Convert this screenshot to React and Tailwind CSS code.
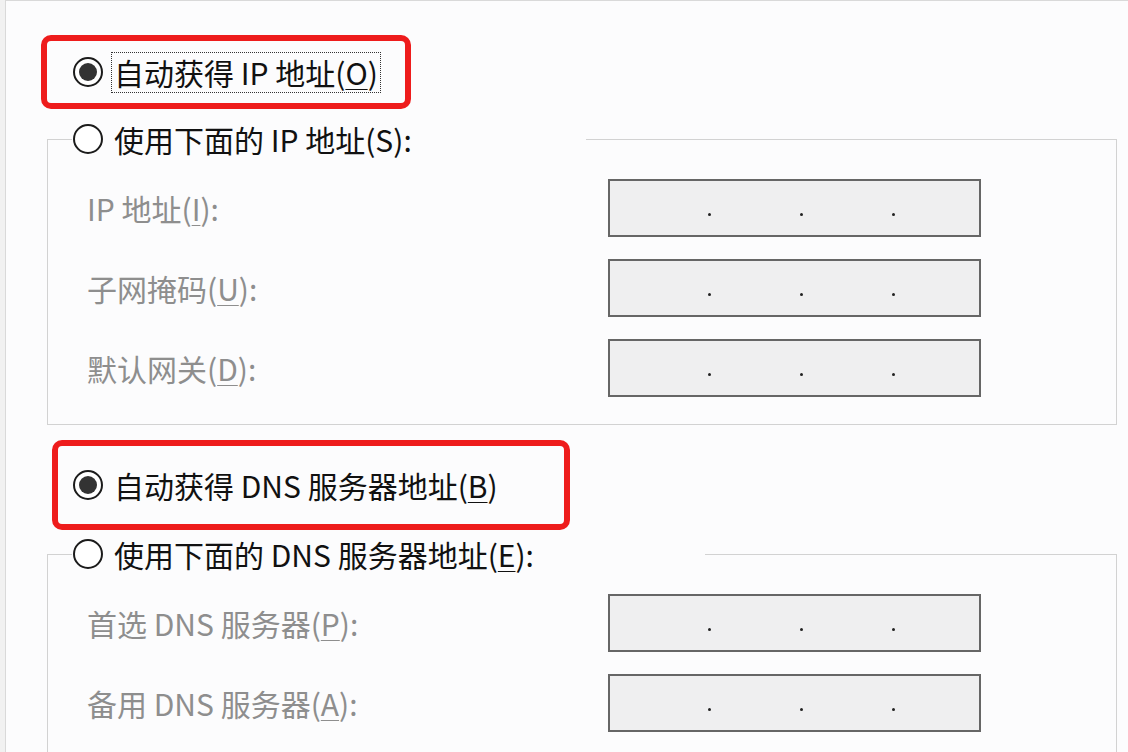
import React from "react";

function Radio({ checked }) {
  return (
    <span className="flex size-[30px] shrink-0 items-center justify-center rounded-full border-2 border-[#1b1b1b] bg-white">
      {checked && <span className="size-[18px] rounded-full bg-[#333333]" />}
    </span>
  );
}

function Acc({ children }) {
  return <span className="underline decoration-1 underline-offset-[4px]">{children}</span>;
}

function IpBox() {
  return (
    <div className="flex h-[58px] w-[373px] shrink-0 items-start gap-[89px] border-2 border-[#666666] bg-[#efeff0] pl-[98px] pt-[32px]">
      <span className="size-[3px] rounded-full bg-[#222222]" />
      <span className="size-[3px] rounded-full bg-[#222222]" />
      <span className="size-[3px] rounded-full bg-[#222222]" />
    </div>
  );
}

function Row({ label }) {
  return (
    <div className="flex items-center pl-[39px]">
      <div className="w-[521px] shrink-0 text-[30px] leading-none text-[#8e8e8e]">{label}</div>
      <IpBox />
    </div>
  );
}

export default function App() {
  return (
    <div className="h-[752px] w-[1128px] overflow-hidden bg-[#f1f1f1] pl-[5px] font-['Noto_Sans_CJK_SC','Noto_Sans',sans-serif]">
      <div className="flex h-full flex-col items-start border-l border-t border-[#d9d9d9] bg-[#fcfcfd]">
        {/* Auto IP (highlighted) */}
        <div className="ml-[35px] mt-[34px] flex h-[74px] w-[370px] shrink-0 items-center rounded-[10px] border-[6px] border-[#ee1c1c] pl-[26px]">
          <Radio checked />
          <div className="ml-[8px] flex h-[41px] items-center border border-dotted border-[#333333] px-[2px] text-[30px] leading-none text-[#111111]">
            自动获得 IP 地址(<Acc>O</Acc>)
          </div>
        </div>

        {/* Manual IP group */}
        <fieldset className="ml-[41px] mt-[12px] w-[1070px] min-w-0 shrink-0 border border-[#d2d2d2]">
          <legend className="ml-[24px] flex h-[36px] w-[514px] items-center pl-[1px]">
            <Radio />
            <span className="ml-[11px] text-[30px] leading-none text-[#111111]">使用下面的 IP 地址(S):</span>
          </legend>
          <div className="flex flex-col gap-[22px] pb-[27px] pt-[22px]">
            <Row label={<>IP 地址(<Acc>I</Acc>):</>} />
            <Row label={<>子网掩码(<Acc>U</Acc>):</>} />
            <Row label={<>默认网关(<Acc>D</Acc>):</>} />
          </div>
        </fieldset>

        {/* Auto DNS (highlighted) */}
        <div className="ml-[46px] mt-[15px] flex h-[90px] w-[518px] shrink-0 items-center rounded-[10px] border-[6px] border-[#ee1c1c] pl-[15px]">
          <Radio checked />
          <span className="ml-[11px] text-[30px] leading-none text-[#111111]">
            自动获得 DNS 服务器地址(<Acc>B</Acc>)
          </span>
        </div>

        {/* Manual DNS group */}
        <fieldset className="ml-[41px] mt-[6px] w-[1070px] min-w-0 shrink-0 border border-[#d2d2d2]">
          <legend className="ml-[24px] flex h-[36px] w-[633px] items-center pl-[1px]">
            <Radio />
            <span className="ml-[11px] text-[30px] leading-none text-[#111111]">
              使用下面的 DNS 服务器地址(<Acc>E</Acc>):
            </span>
          </legend>
          <div className="flex flex-col gap-[22px] pb-[40px] pt-[22px]">
            <Row label={<>首选 DNS 服务器(<Acc>P</Acc>):</>} />
            <Row label={<>备用 DNS 服务器(<Acc>A</Acc>):</>} />
          </div>
        </fieldset>
      </div>
    </div>
  );
}
